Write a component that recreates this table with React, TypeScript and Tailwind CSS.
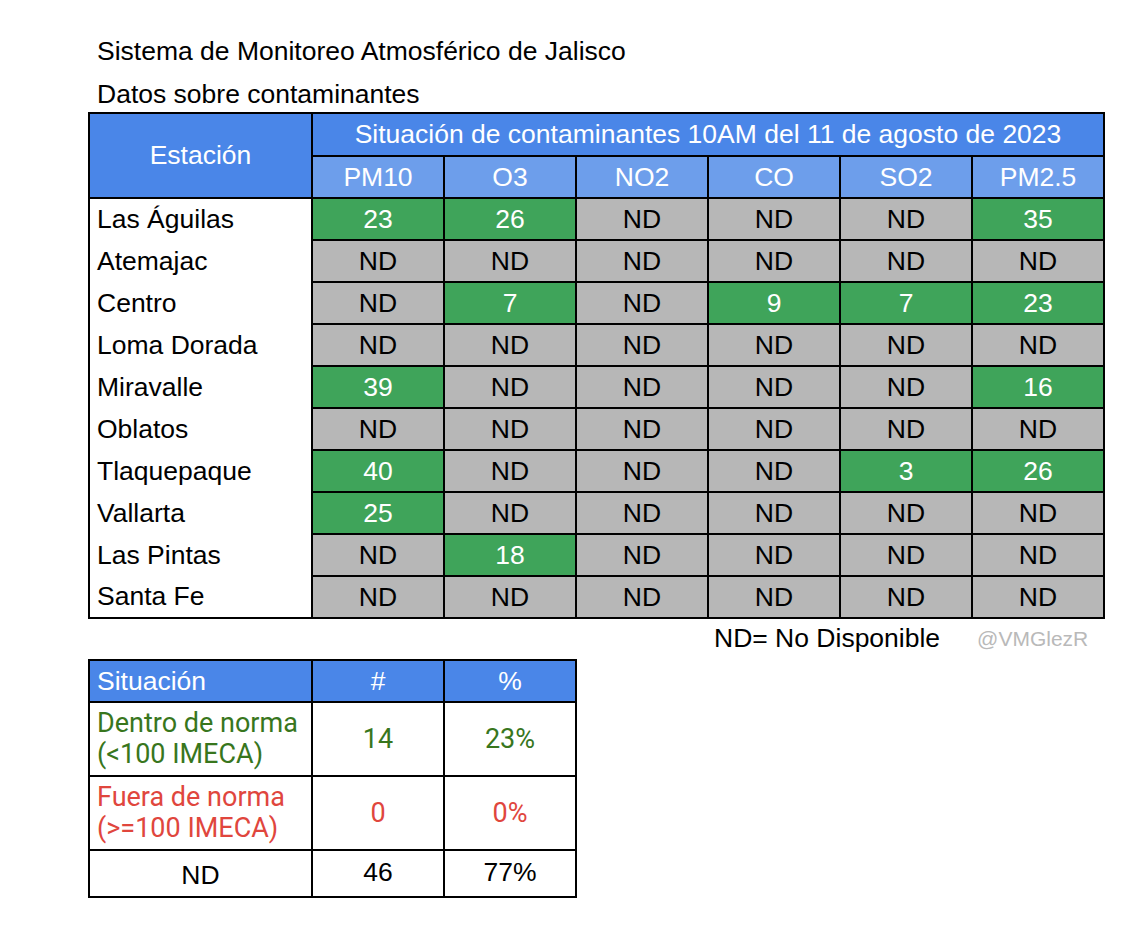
import React from "react"

const cols = ["PM10", "O3", "NO2", "CO", "SO2", "PM2.5"]

const rows: [string, (number | null)[]][] = [
  ["Las Águilas", [23, 26, null, null, null, 35]],
  ["Atemajac", [null, null, null, null, null, null]],
  ["Centro", [null, 7, null, 9, 7, 23]],
  ["Loma Dorada", [null, null, null, null, null, null]],
  ["Miravalle", [39, null, null, null, null, 16]],
  ["Oblatos", [null, null, null, null, null, null]],
  ["Tlaquepaque", [40, null, null, null, 3, 26]],
  ["Vallarta", [25, null, null, null, null, null]],
  ["Las Pintas", [null, 18, null, null, null, null]],
  ["Santa Fe", [null, null, null, null, null, null]],
]

export default function App() {
  return (
    <div className="min-h-[926px] w-[1142px] bg-white font-['Liberation_Sans',Arial,sans-serif] text-[26.5px] text-black">
      <div className="pl-[97px] pt-[36px] leading-[30px]">
        <p>Sistema de Monitoreo Atmosférico de Jalisco</p>
        <p className="mt-[13px]">Datos sobre contaminantes</p>
      </div>

      {/* Main table */}
      <table className="mt-[3px] ml-[88px] table-fixed border-collapse border-2 border-black leading-none">
        <colgroup>
          <col className="w-[223px]" />
          {cols.map((c) => (
            <col key={c} className="w-[132px]" />
          ))}
        </colgroup>
        <thead>
          <tr className="h-[43px]">
            <th rowSpan={2} className="border-2 border-black bg-[#4a86e8] font-normal text-white">
              Estación
            </th>
            <th colSpan={6} className="whitespace-nowrap border-2 border-black bg-[#4a86e8] font-normal text-white">
              Situación de contaminantes 10AM del 11 de agosto de 2023
            </th>
          </tr>
          <tr className="h-[42px]">
            {cols.map((c) => (
              <th key={c} className="border-2 border-black bg-[#6d9eeb] font-normal text-white">
                {c}
              </th>
            ))}
          </tr>
        </thead>
        <tbody>
          {rows.map(([name, vals]) => (
            <tr key={name} className="h-[42px]">
              <td className="border-x-2 border-black pl-[7px]">{name}</td>
              {vals.map((v, i) =>
                v === null ? (
                  <td key={i} className="border-2 border-black bg-[#b7b7b7] text-center">
                    ND
                  </td>
                ) : (
                  <td key={i} className="border-2 border-black bg-[#3fa45a] text-center text-white">
                    {v}
                  </td>
                )
              )}
            </tr>
          ))}
        </tbody>
      </table>

      <div className="flex h-[40px] items-center">
        <span className="ml-[714px]">ND= No Disponible</span>
        <span className="ml-[37px] text-[21px] text-[#b9b9b9]">@VMGlezR</span>
      </div>

      {/* Summary table */}
      <table className="ml-[88px] table-fixed border-collapse border-2 border-black leading-[31px]">
        <colgroup>
          <col className="w-[223px]" />
          <col className="w-[132px]" />
          <col className="w-[132px]" />
        </colgroup>
        <thead>
          <tr className="h-[42px] bg-[#4a86e8] text-white">
            <th className="border-2 border-black pl-[7px] text-left font-normal">Situación</th>
            <th className="border-2 border-black font-normal">#</th>
            <th className="border-2 border-black font-normal">%</th>
          </tr>
        </thead>
        <tbody className="font-['Roboto',sans-serif] text-[27px]">
          <tr className="h-[74px] text-[#38761d]">
            <td className="whitespace-nowrap border-2 border-black pl-[7px]">
              Dentro de norma
              <br />
              (&lt;100 IMECA)
            </td>
            <td className="border-2 border-black text-center">14</td>
            <td className="border-2 border-black text-center">23%</td>
          </tr>
          <tr className="h-[74px] text-[#e0463d]">
            <td className="whitespace-nowrap border-2 border-black pl-[7px]">
              Fuera de norma
              <br />
              (&gt;=100 IMECA)
            </td>
            <td className="border-2 border-black text-center">0</td>
            <td className="border-2 border-black text-center">0%</td>
          </tr>
          <tr className="h-[47px] align-bottom font-['Liberation_Sans',Arial,sans-serif] text-[26.5px]">
            <td className="border-2 border-black pb-[5px] text-center">ND</td>
            <td className="border-2 border-black pb-[8px] text-center">46</td>
            <td className="border-2 border-black pb-[8px] text-center">77%</td>
          </tr>
        </tbody>
      </table>
    </div>
  )
}
